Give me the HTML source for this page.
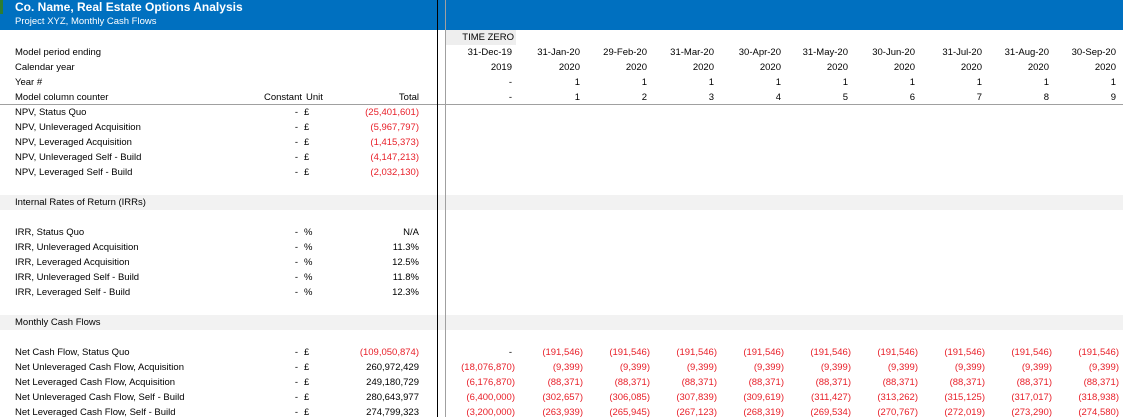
<!DOCTYPE html><html><head><style>
body{margin:0;width:1123px;height:417px;overflow:hidden;background:#fff;font-family:"Liberation Sans",sans-serif;font-size:9.5px;color:#000;position:relative}
.a{position:absolute;white-space:nowrap;line-height:15px;height:15px}
.r{text-align:right}
.red{color:#e8202a}
.band{position:absolute;left:0;width:1123px;height:15px;background:#f2f2f2}
</style></head><body>
<div style="position:absolute;left:0;top:0;width:1123px;height:30px;background:#0070c0"></div>
<div style="position:absolute;left:0;top:0;width:3px;height:14px;background:#2e7d32"></div>
<div class="a" style="left:15px;top:0;color:#fff;font-weight:bold;font-size:12px">Co. Name, Real Estate Options Analysis</div>
<div class="a" style="left:15px;top:14px;color:#fff;font-size:9.5px">Project XYZ, Monthly Cash Flows</div>
<div class="band" style="top:195px"></div>
<div class="band" style="top:315px"></div>
<div style="position:absolute;left:446px;top:30px;width:70px;height:15px;background:#eeeeee"></div>
<div class="a r" style="left:446px;top:30px;width:68px">TIME ZERO</div>
<div style="position:absolute;left:0;top:104px;width:1123px;height:1px;background:#a0a0a0"></div>
<div style="position:absolute;left:437px;top:0;width:1px;height:417px;background:#000"></div>
<div style="position:absolute;left:445px;top:0;width:1px;height:417px;background:#a0a0a0"></div>
<div id="c"></div>
<script>
var h='';function t(x,y,s,cl,w){h+='<div class="a '+(cl||'')+'" style="left:'+x+'px;top:'+y+'px'+(w?';width:'+w+'px':'')+'">'+s+'</div>';}
function R(re,y,s,cl){t(re-120,y,s,'r '+(cl||''),120);}
var L=[[45,'Model period ending'],[60,'Calendar year'],[75,'Year #'],[90,'Model column counter'],[105,'NPV, Status Quo'],[120,'NPV, Unleveraged Acquisition'],[135,'NPV, Leveraged Acquisition'],[150,'NPV, Unleveraged Self - Build'],[165,'NPV, Leveraged Self - Build'],[195,'Internal Rates of Return (IRRs)'],[225,'IRR, Status Quo'],[240,'IRR, Unleveraged Acquisition'],[255,'IRR, Leveraged Acquisition'],[270,'IRR, Unleveraged Self - Build'],[285,'IRR, Leveraged Self - Build'],[315,'Monthly Cash Flows'],[345,'Net Cash Flow, Status Quo'],[360,'Net Unleveraged Cash Flow, Acquisition'],[375,'Net Leveraged Cash Flow, Acquisition'],[390,'Net Unleveraged Cash Flow, Self - Build'],[405,'Net Leveraged Cash Flow, Self - Build']];
L.forEach(function(l){t(15,l[0],l[1]);});
R(302,90,'Constant');t(306,90,'Unit');R(419,90,'Total');
var tot=[[105,'(25,401,601)',1],[120,'(5,967,797)',1],[135,'(1,415,373)',1],[150,'(4,147,213)',1],[165,'(2,032,130)',1],[225,'N/A'],[240,'11.3%'],[255,'12.5%'],[270,'11.8%'],[285,'12.3%'],[345,'(109,050,874)',1],[360,'260,972,429'],[375,'249,180,729'],[390,'280,643,977'],[405,'274,799,323']];
tot.forEach(function(r){R(298,r[0],'-');t(304,r[0],r[0]>=225&&r[0]<300?'%':'£');R(419,r[0],r[1],r[2]?'red':'');});
var E=[512,580,647,714,781,848,915,982,1049,1116];
var D=['31-Dec-19','31-Jan-20','29-Feb-20','31-Mar-20','30-Apr-20','31-May-20','30-Jun-20','31-Jul-20','31-Aug-20','30-Sep-20'];
E.forEach(function(e,i){R(e,45,D[i]);R(e,60,i?'2020':'2019');R(e,75,i?'1':'-');R(e,90,i?String(i):'-');});
var C=[['-','(191,546)','(191,546)','(191,546)','(191,546)','(191,546)','(191,546)','(191,546)','(191,546)','(191,546)'],
['(18,076,870)','(9,399)','(9,399)','(9,399)','(9,399)','(9,399)','(9,399)','(9,399)','(9,399)','(9,399)'],
['(6,176,870)','(88,371)','(88,371)','(88,371)','(88,371)','(88,371)','(88,371)','(88,371)','(88,371)','(88,371)'],
['(6,400,000)','(302,657)','(306,085)','(307,839)','(309,619)','(311,427)','(313,262)','(315,125)','(317,017)','(318,938)'],
['(3,200,000)','(263,939)','(265,945)','(267,123)','(268,319)','(269,534)','(270,767)','(272,019)','(273,290)','(274,580)']];
C.forEach(function(row,j){row.forEach(function(v,i){R(E[i]+(v[0]=='('?3:0),345+15*j,v,v=='-'?'':'red');});});
document.getElementById('c').innerHTML=h;
</script>
</body></html>
